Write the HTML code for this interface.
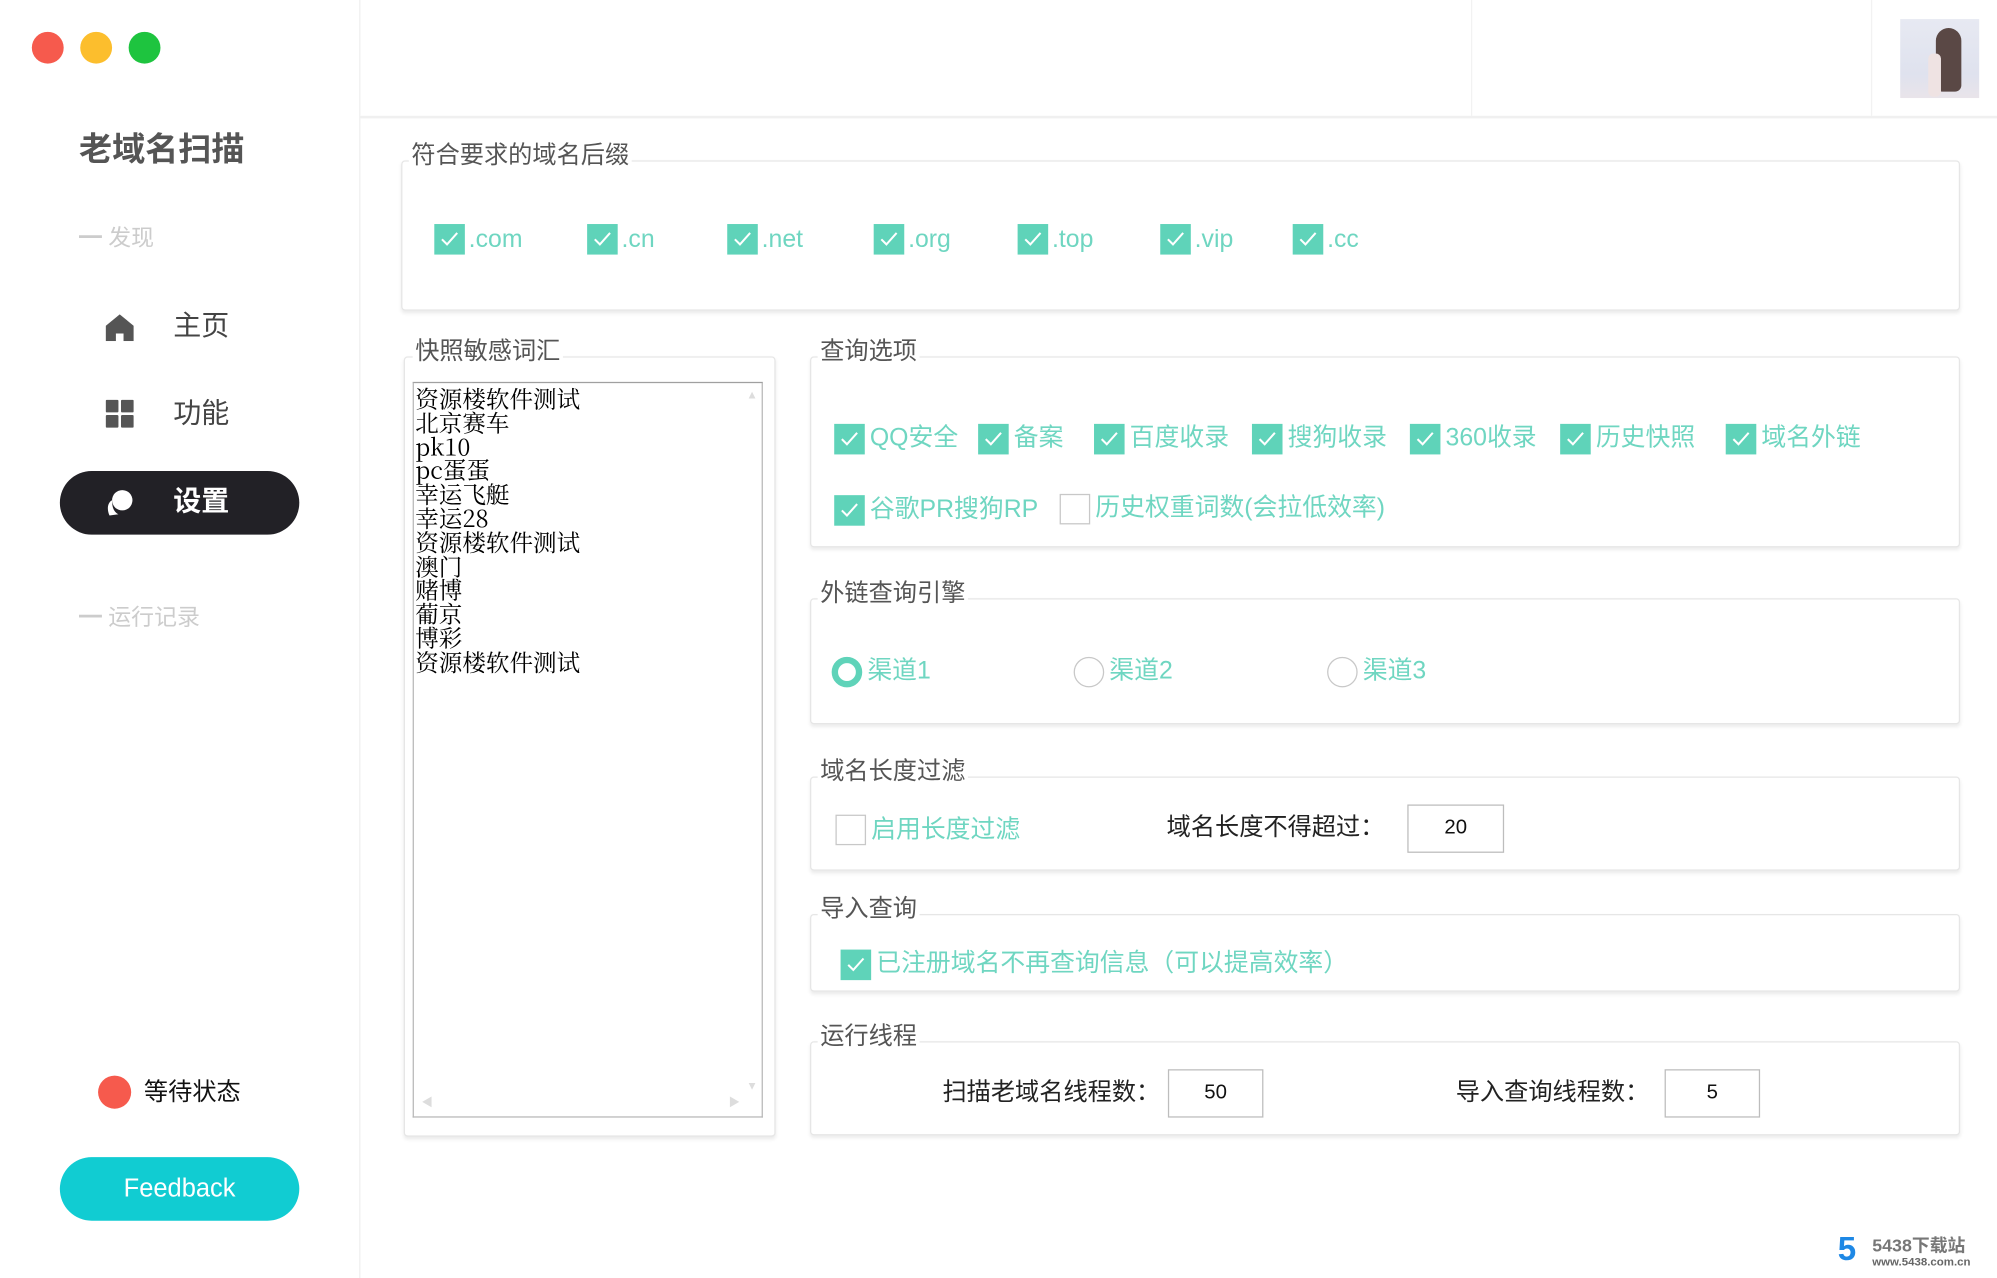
<!DOCTYPE html>
<html><head><meta charset="utf-8"><style>
html,body{margin:0;padding:0;width:1997px;height:1278px;overflow:hidden;background:#fff}
#w{position:absolute;left:0;top:0;width:1568px;height:1004px;transform:scale(1.2736,1.2729);transform-origin:0 0;font-family:"Liberation Sans","Noto Sans CJK SC",sans-serif;}
.a{position:absolute}
.t{position:absolute;white-space:nowrap;line-height:1}
.box{position:absolute;border:1px solid #e6e6e6;border-radius:3px;box-shadow:0 2px 3px rgba(0,0,0,0.08);background:#fff}
.lg{position:absolute;background:#fff;color:#555;font-size:19px;line-height:1;padding:0 2px;white-space:nowrap}
.cb{position:absolute;width:24px;height:24px;background:#5fd3b9}
.cb svg{position:absolute;left:4px;top:5px}
.ub{position:absolute;width:22px;height:22px;border:1px solid #c8c8c8;background:#fff}
.g{position:absolute;color:#6fd6c1;font-size:19.5px;line-height:1;white-space:nowrap}
.inp{position:absolute;border:1px solid #bdbdbd;background:#fff;font-size:16px;text-align:center;color:#111}
.k{position:absolute;color:#222;font-size:19px;line-height:1;white-space:nowrap}
</style></head><body><div id="w">
<div class="a" style="left:282px;top:0;width:1px;height:1004px;background:#f0f0f0"></div>
<div class="a" style="left:283px;top:91px;width:1285px;height:2px;background:#f0f0f0"></div>
<div class="a" style="left:1155px;top:0;width:1px;height:91px;background:#f2f2f2"></div>
<div class="a" style="left:1469px;top:0;width:1px;height:91px;background:#f2f2f2"></div>
<div class="a" style="left:25px;top:25px;width:25px;height:25px;border-radius:50%;background:#f65a4d"></div>
<div class="a" style="left:63px;top:25px;width:25px;height:25px;border-radius:50%;background:#fcbe2d"></div>
<div class="a" style="left:101px;top:25px;width:25px;height:25px;border-radius:50%;background:#1ec43f"></div>
<div class="t" style="left:62px;top:104px;font-size:26px;font-weight:bold;color:#555">老域名扫描</div>
<div class="t" style="left:62px;top:178px;font-size:18px;color:#ccc">━ 发现</div>
<svg class="a" style="left:83px;top:246px" width="22" height="22" viewBox="0 0 22 22"><path d="M11 1 L22 10 V22 H14 V16 H8 V22 H0 V10 Z" fill="#555"/></svg>
<div class="t" style="left:136px;top:245px;font-size:22px;color:#444">主页</div>
<svg class="a" style="left:83px;top:314px" width="22" height="22" viewBox="0 0 22 22"><rect x="0" y="0" width="10" height="10" rx="1" fill="#555"/><rect x="12" y="0" width="10" height="10" rx="1" fill="#555"/><rect x="0" y="12" width="10" height="10" rx="1" fill="#555"/><rect x="12" y="12" width="10" height="10" rx="1" fill="#555"/></svg>
<div class="t" style="left:136px;top:314px;font-size:22px;color:#444">功能</div>
<div class="a" style="left:47px;top:370px;width:188px;height:50px;border-radius:25px;background:#222126"></div>
<svg class="a" style="left:82px;top:383px" width="24" height="24" viewBox="0 0 24 24"><circle cx="14" cy="10" r="8" fill="#fff"/><path d="M6 10 C2 12 2 18 4 22 L11 21 C7 19 6 15 6 10Z" fill="#fff"/></svg>
<div class="t" style="left:136px;top:383px;font-size:22px;color:#fff;font-weight:bold">设置</div>
<div class="t" style="left:62px;top:476px;font-size:18px;color:#ccc">━ 运行记录</div>
<div class="a" style="left:77px;top:845px;width:26px;height:26px;border-radius:50%;background:#f65a4d"></div>
<div class="t" style="left:113px;top:849px;font-size:19px;color:#111">等待状态</div>
<div class="a" style="left:47px;top:909px;width:188px;height:50px;border-radius:25px;background:#11ccd2;color:#fff;font-size:20px;line-height:50px;text-align:center">Feedback</div>
<div class="a" style="left:1492px;top:15px;width:62px;height:62px;background:linear-gradient(180deg,#e7e9f2,#dfe2ee 70%,#e9e4ea)"></div>
<div class="a" style="left:1520px;top:22px;width:20px;height:50px;border-radius:12px 12px 6px 6px;background:#5a4845"></div>
<div class="a" style="left:1514px;top:42px;width:10px;height:34px;background:#efe3e3;border-radius:4px"></div>

<div class="box" style="left:315px;top:126px;width:1222px;height:116px"></div>
<div class="lg" style="left:321px;top:113px">符合要求的域名后缀</div>
<div class="cb" style="left:341px;top:176px"><svg width="16" height="14"><path d="M2 7 L6 11 L14 2" stroke="#fff" stroke-width="1.6" fill="none"/></svg></div><div class="g" style="left:368px;top:179px">.com</div>
<div class="cb" style="left:461px;top:176px"><svg width="16" height="14"><path d="M2 7 L6 11 L14 2" stroke="#fff" stroke-width="1.6" fill="none"/></svg></div><div class="g" style="left:488px;top:179px">.cn</div>
<div class="cb" style="left:571px;top:176px"><svg width="16" height="14"><path d="M2 7 L6 11 L14 2" stroke="#fff" stroke-width="1.6" fill="none"/></svg></div><div class="g" style="left:598px;top:179px">.net</div>
<div class="cb" style="left:686px;top:176px"><svg width="16" height="14"><path d="M2 7 L6 11 L14 2" stroke="#fff" stroke-width="1.6" fill="none"/></svg></div><div class="g" style="left:713px;top:179px">.org</div>
<div class="cb" style="left:799px;top:176px"><svg width="16" height="14"><path d="M2 7 L6 11 L14 2" stroke="#fff" stroke-width="1.6" fill="none"/></svg></div><div class="g" style="left:826px;top:179px">.top</div>
<div class="cb" style="left:911px;top:176px"><svg width="16" height="14"><path d="M2 7 L6 11 L14 2" stroke="#fff" stroke-width="1.6" fill="none"/></svg></div><div class="g" style="left:938px;top:179px">.vip</div>
<div class="cb" style="left:1015px;top:176px"><svg width="16" height="14"><path d="M2 7 L6 11 L14 2" stroke="#fff" stroke-width="1.6" fill="none"/></svg></div><div class="g" style="left:1042px;top:179px">.cc</div>

<div class="box" style="left:317px;top:280px;width:290px;height:611px"></div>
<div class="lg" style="left:324px;top:267px">快照敏感词汇</div>
<div class="a" style="left:324px;top:300px;width:273px;height:576px;border:1px solid #b8b8b8;border-top-color:#a0a0a0;background:#fff"></div>
<div class="a" style="left:326px;top:304px;font-family:'Noto Serif CJK SC','Liberation Serif',serif;font-size:18.5px;line-height:18.8px;color:#000;white-space:pre">资源楼软件测试
北京赛车
pk10
pc蛋蛋
幸运飞艇
幸运28
资源楼软件测试
澳门
赌博
葡京
博彩
资源楼软件测试</div>
<div class="t" style="left:586px;top:306px;font-size:9px;color:#ddd">▲</div>
<div class="t" style="left:586px;top:849px;font-size:9px;color:#ddd">▼</div>
<div class="t" style="left:331px;top:862px;font-size:9px;color:#ddd">◀</div>
<div class="t" style="left:572px;top:862px;font-size:9px;color:#ddd">▶</div>

<div class="box" style="left:636px;top:280px;width:901px;height:148px"></div>
<div class="lg" style="left:642px;top:267px">查询选项</div>
<div class="cb" style="left:655px;top:333px"><svg width="16" height="14"><path d="M2 7 L6 11 L14 2" stroke="#fff" stroke-width="1.6" fill="none"/></svg></div><div class="g" style="left:683px;top:335px">QQ安全</div>
<div class="cb" style="left:768px;top:333px"><svg width="16" height="14"><path d="M2 7 L6 11 L14 2" stroke="#fff" stroke-width="1.6" fill="none"/></svg></div><div class="g" style="left:796px;top:335px">备案</div>
<div class="cb" style="left:859px;top:333px"><svg width="16" height="14"><path d="M2 7 L6 11 L14 2" stroke="#fff" stroke-width="1.6" fill="none"/></svg></div><div class="g" style="left:887px;top:335px">百度收录</div>
<div class="cb" style="left:983px;top:333px"><svg width="16" height="14"><path d="M2 7 L6 11 L14 2" stroke="#fff" stroke-width="1.6" fill="none"/></svg></div><div class="g" style="left:1011px;top:335px">搜狗收录</div>
<div class="cb" style="left:1107px;top:333px"><svg width="16" height="14"><path d="M2 7 L6 11 L14 2" stroke="#fff" stroke-width="1.6" fill="none"/></svg></div><div class="g" style="left:1135px;top:335px">360收录</div>
<div class="cb" style="left:1225px;top:333px"><svg width="16" height="14"><path d="M2 7 L6 11 L14 2" stroke="#fff" stroke-width="1.6" fill="none"/></svg></div><div class="g" style="left:1253px;top:335px">历史快照</div>
<div class="cb" style="left:1355px;top:333px"><svg width="16" height="14"><path d="M2 7 L6 11 L14 2" stroke="#fff" stroke-width="1.6" fill="none"/></svg></div><div class="g" style="left:1383px;top:335px">域名外链</div>
<div class="cb" style="left:655px;top:389px"><svg width="16" height="14"><path d="M2 7 L6 11 L14 2" stroke="#fff" stroke-width="1.6" fill="none"/></svg></div><div class="g" style="left:683px;top:391px">谷歌PR搜狗RP</div>
<div class="ub" style="left:832px;top:388px"></div><div class="g" style="left:860px;top:390px">历史权重词数(会拉低效率)</div>

<div class="box" style="left:636px;top:470px;width:901px;height:97px"></div>
<div class="lg" style="left:642px;top:457px">外链查询引擎</div>
<div class="a" style="left:653px;top:516px;width:14px;height:14px;border-radius:50%;border:5px solid #5fd3b9;background:#fff"></div><div class="g" style="left:681px;top:518px">渠道1</div>
<div class="a" style="left:843px;top:516px;width:22px;height:22px;border-radius:50%;border:1px solid #c8c8c8"></div><div class="g" style="left:871px;top:518px">渠道2</div>
<div class="a" style="left:1042px;top:516px;width:22px;height:22px;border-radius:50%;border:1px solid #c8c8c8"></div><div class="g" style="left:1070px;top:518px">渠道3</div>

<div class="box" style="left:636px;top:610px;width:901px;height:72px"></div>
<div class="lg" style="left:642px;top:597px">域名长度过滤</div>
<div class="ub" style="left:656px;top:640px"></div><div class="g" style="left:684px;top:643px">启用长度过滤</div>
<div class="k" style="left:916px;top:641px">域名长度不得超过：</div>
<div class="inp" style="left:1105px;top:632px;width:74px;height:36px;line-height:36px">20</div>

<div class="box" style="left:636px;top:718px;width:901px;height:59px"></div>
<div class="lg" style="left:642px;top:705px">导入查询</div>
<div class="cb" style="left:660px;top:746px"><svg width="16" height="14"><path d="M2 7 L6 11 L14 2" stroke="#fff" stroke-width="1.6" fill="none"/></svg></div><div class="g" style="left:688px;top:748px">已注册域名不再查询信息（可以提高效率）</div>

<div class="box" style="left:636px;top:818px;width:901px;height:72px"></div>
<div class="lg" style="left:642px;top:805px">运行线程</div>
<div class="k" style="left:740px;top:849px">扫描老域名线程数：</div>
<div class="inp" style="left:917px;top:840px;width:73px;height:36px;line-height:36px">50</div>
<div class="k" style="left:1143px;top:849px">导入查询线程数：</div>
<div class="inp" style="left:1307px;top:840px;width:73px;height:36px;line-height:36px">5</div>

<div class="t" style="left:1443px;top:968px;font-size:26px;font-weight:bold;color:#1e88e5">5</div>
<div class="t" style="left:1470px;top:971px;font-size:14px;font-weight:bold;color:#777">5438下载站</div>
<div class="t" style="left:1470px;top:987px;font-size:9px;font-weight:bold;color:#666">www.5438.com.cn</div>
</div></body></html>
